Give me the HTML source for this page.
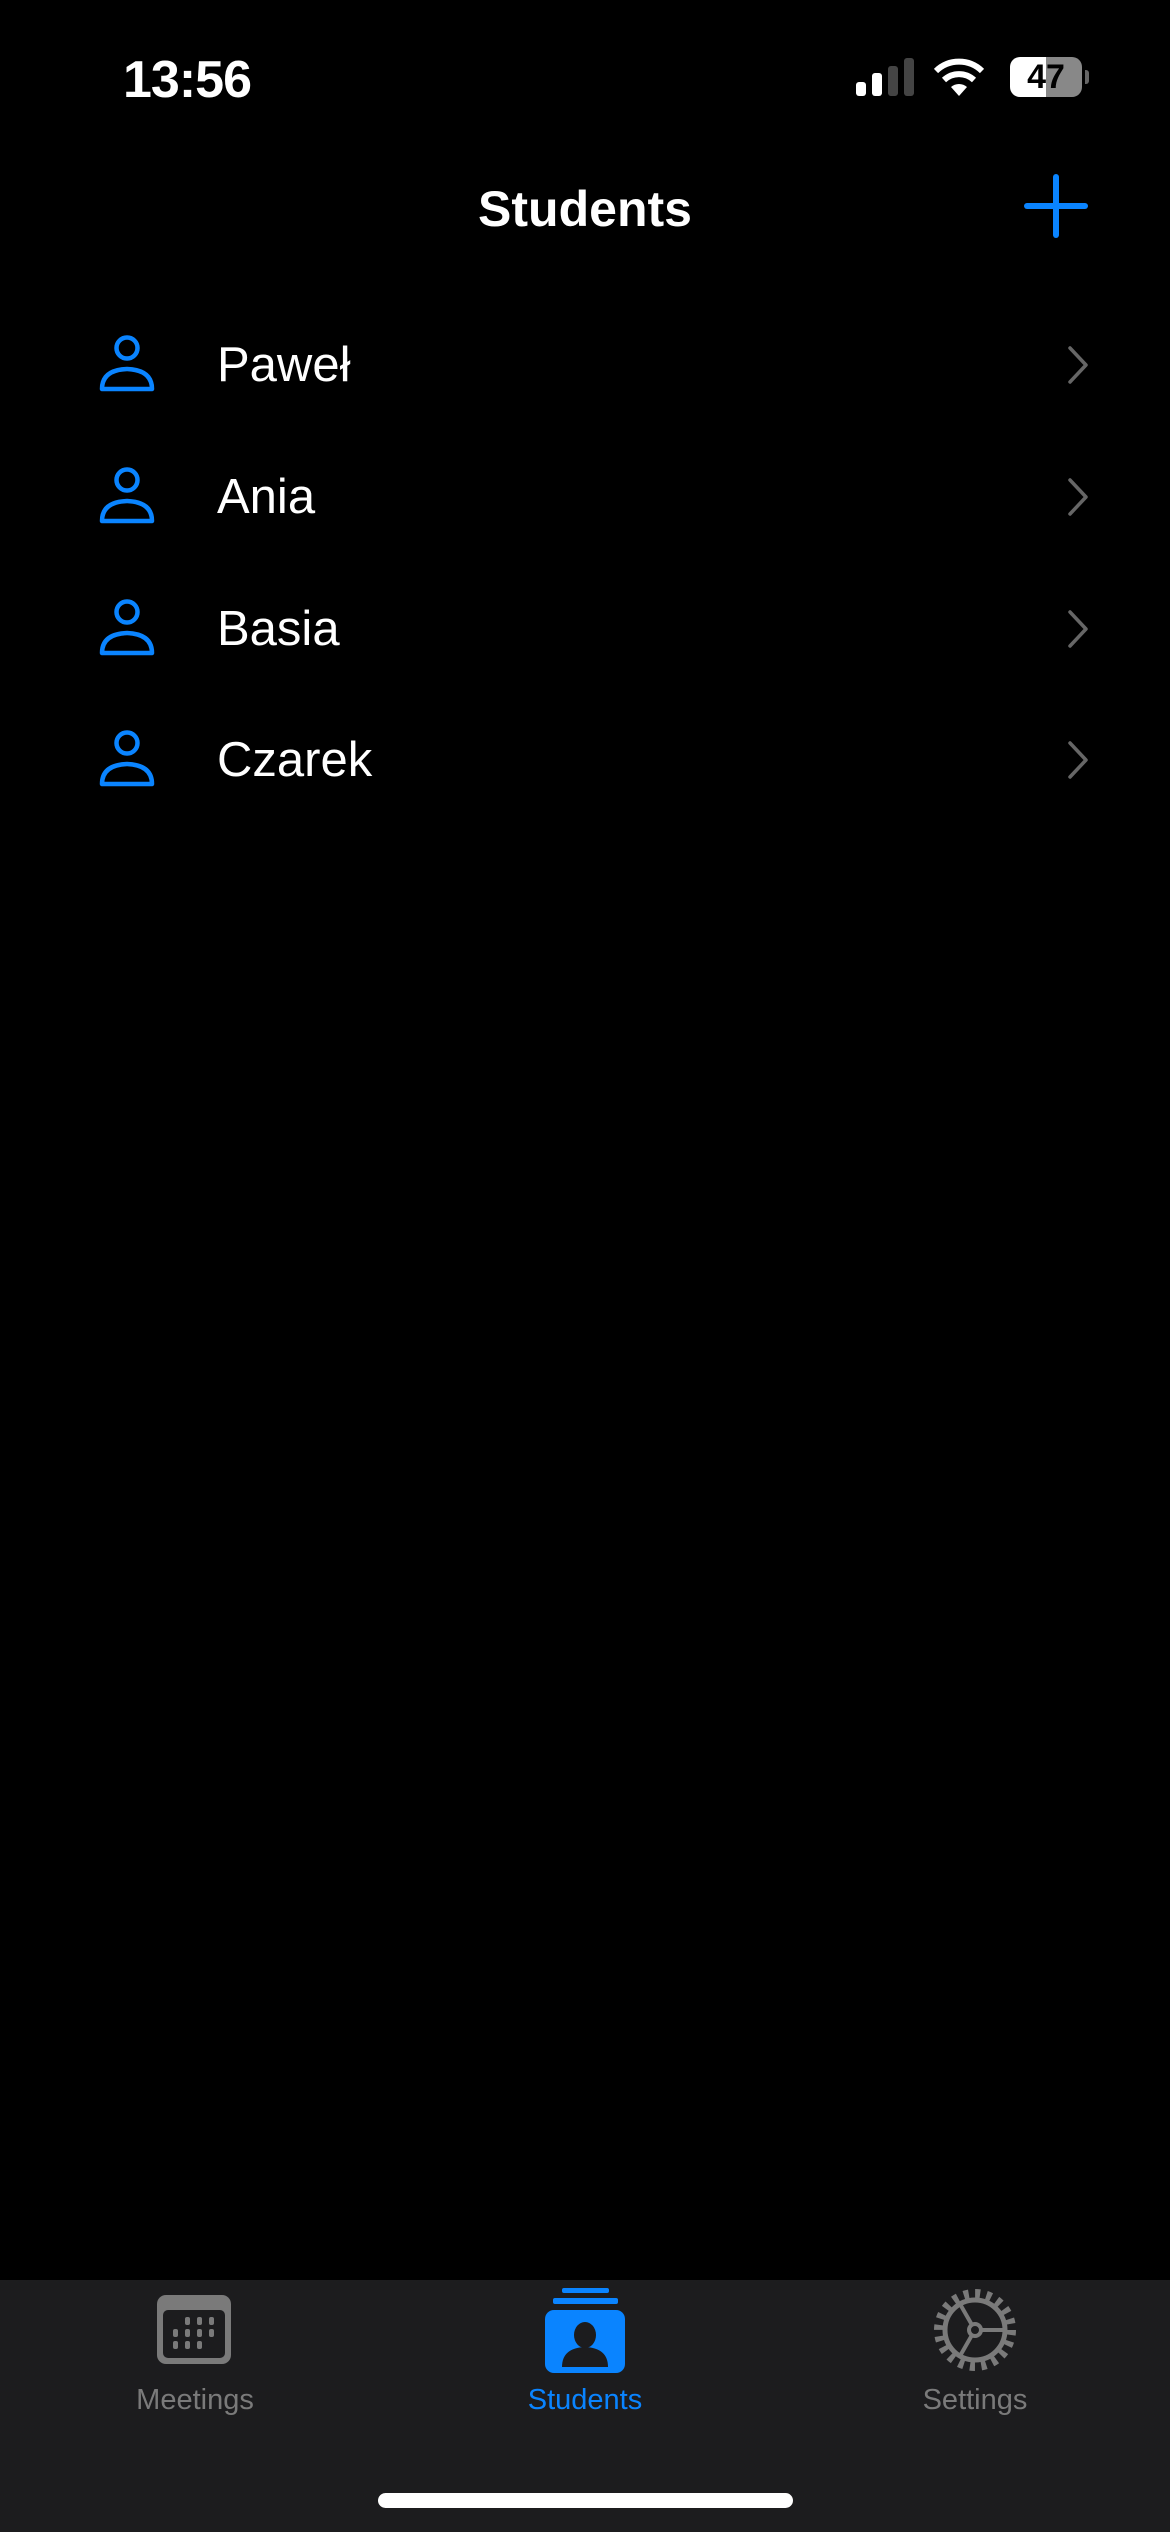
<!DOCTYPE html>
<html><head><meta charset="utf-8"><style>
body{margin:0;width:1170px;height:2532px;background:#000;position:relative;overflow:hidden;font-family:"Liberation Sans",sans-serif;color:#fff}
.a{position:absolute}
.name{position:absolute;left:217px;font-size:49px;line-height:1}
.tab{position:absolute;font-size:29px;top:2384px;width:240px;text-align:center}
</style></head><body>
<div class="a" style="left:123px;top:50px;font-size:52px;font-weight:bold;letter-spacing:-1px">13:56</div>
<!-- signal -->
<div class="a" style="left:856px;top:82px;width:10px;height:14px;background:#fff;border-radius:3px"></div>
<div class="a" style="left:872px;top:73px;width:10px;height:23px;background:#fff;border-radius:3px"></div>
<div class="a" style="left:888px;top:66px;width:10px;height:30px;background:#444;border-radius:3px"></div>
<div class="a" style="left:904px;top:58px;width:10px;height:38px;background:#444;border-radius:3px"></div>
<svg class="a" style="left:932px;top:58px" width="54" height="40" viewBox="0 0 54 40"><path d="M27 38 L19 29 A12 12 0 0 1 35 29 Z" fill="#fff"/><path d="M12 22 A22 22 0 0 1 42 22" stroke="#fff" stroke-width="6" fill="none"/><path d="M4 13 A33 33 0 0 1 50 13" stroke="#fff" stroke-width="6" fill="none"/></svg>
<div class="a" style="left:1010px;top:57px;width:72px;height:40px;border-radius:10px;background:linear-gradient(90deg,#fff 0 50%,#888 50%);color:#000;font-weight:bold;font-size:34px;text-align:center;line-height:40px">47</div>
<div class="a" style="left:1085px;top:70px;width:4px;height:14px;background:#666;border-radius:0 3px 3px 0"></div>

<div class="a" style="left:0;width:1170px;top:180px;text-align:center;font-size:50px;font-weight:bold">Students</div>
<div class="a" style="left:1024px;top:203px;width:64px;height:6px;background:#0a84ff;border-radius:3px"></div>
<div class="a" style="left:1053px;top:174px;width:6px;height:64px;background:#0a84ff;border-radius:3px"></div>

<!-- rows -->
<svg class="a" style="left:0;top:0" width="1170" height="800">
<defs><g id="p" fill="none" stroke="#0a84ff" stroke-width="4.5"><circle cx="127" cy="348" r="10.5"/><path d="M102 389 Q102 370 127 369 Q152 370 152 389 Z" stroke-linejoin="round"/></g>
<path id="c" d="M1070 348 L1086 365 L1070 382" stroke="#666" stroke-width="3.5" fill="none" stroke-linecap="round" stroke-linejoin="round"/></defs>
<use href="#p"/><use href="#c"/>
<use href="#p" y="132"/><use href="#c" y="132"/>
<use href="#p" y="264"/><use href="#c" y="264"/>
<use href="#p" y="395"/><use href="#c" y="395"/>
</svg>
<div class="name" style="top:341px">Paweł</div>
<div class="name" style="top:473px">Ania</div>
<div class="name" style="top:605px">Basia</div>
<div class="name" style="top:736px">Czarek</div>

<!-- tab bar -->
<div class="a" style="left:0;top:2280px;width:1170px;height:252px;background:#1c1c1e"></div>
<svg class="a" style="left:0;top:2280px" width="1170" height="110">
<rect x="157" y="15" width="74" height="69" rx="9" fill="#7a7a7a"/>
<rect x="163" y="30" width="62" height="48" rx="5" fill="#1c1c1e"/>
<g fill="#7a7a7a"><rect x="185" y="37" width="5" height="8" rx="2"/><rect x="197" y="37" width="5" height="8" rx="2"/><rect x="209" y="37" width="5" height="8" rx="2"/>
<rect x="173" y="49" width="5" height="8" rx="2"/><rect x="185" y="49" width="5" height="8" rx="2"/><rect x="197" y="49" width="5" height="8" rx="2"/><rect x="209" y="49" width="5" height="8" rx="2"/>
<rect x="173" y="61" width="5" height="8" rx="2"/><rect x="185" y="61" width="5" height="8" rx="2"/><rect x="197" y="61" width="5" height="8" rx="2"/></g>
<rect x="562" y="8" width="47" height="5" rx="2" fill="#0a84ff"/>
<rect x="553" y="18" width="65" height="6" rx="2" fill="#0a84ff"/>
<rect x="545" y="30" width="80" height="63" rx="9" fill="#0a84ff"/>
<ellipse cx="585" cy="55" rx="11" ry="13" fill="#1c1c1e"/>
<path d="M562 87 Q562 68 585 67 Q608 68 608 87 Z" fill="#1c1c1e"/>
<g stroke="#7a7a7a" fill="none"><circle cx="975" cy="50" r="36" stroke-width="10" stroke-dasharray="5 6.3"/><circle cx="975" cy="50" r="30" stroke-width="5"/><circle cx="975" cy="50" r="6" stroke-width="4"/>
<path d="M981 50 L1005 50 M972 45 L960 24 M972 55 L960 76" stroke-width="4"/></g>
</svg>
<div class="tab" style="left:75px;color:#7a7a7a">Meetings</div>
<div class="tab" style="left:465px;color:#0a84ff">Students</div>
<div class="tab" style="left:855px;color:#7a7a7a">Settings</div>
<div class="a" style="left:378px;top:2493px;width:415px;height:15px;background:#fff;border-radius:8px"></div>
</body></html>
